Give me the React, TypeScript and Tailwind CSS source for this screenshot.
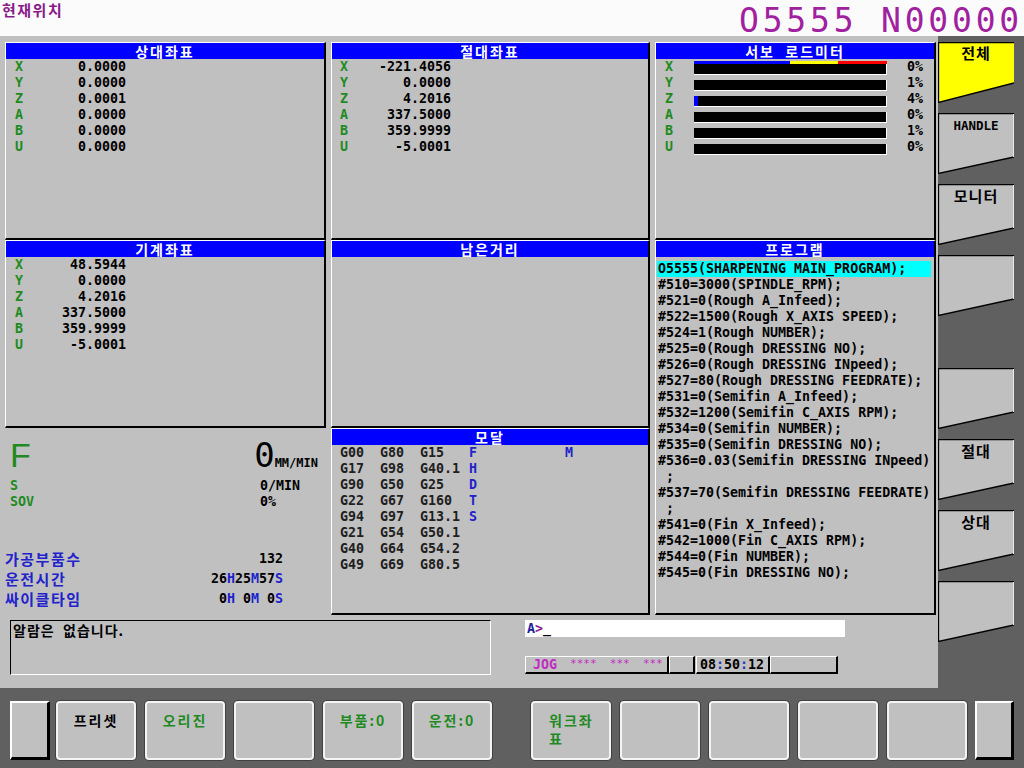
import type { ReactNode } from "react";

const mono = "font-['DejaVu_Sans_Mono','Liberation_Mono',monospace]";
const kr = "font-['Noto_Sans_CJK_KR','Noto_Sans',sans-serif]";

const relative = [
  ["X", "0.0000"],
  ["Y", "0.0000"],
  ["Z", "0.0001"],
  ["A", "0.0000"],
  ["B", "0.0000"],
  ["U", "0.0000"],
];

const absolute = [
  ["X", "-221.4056"],
  ["Y", "0.0000"],
  ["Z", "4.2016"],
  ["A", "337.5000"],
  ["B", "359.9999"],
  ["U", "-5.0001"],
];

const machine = [
  ["X", "48.5944"],
  ["Y", "0.0000"],
  ["Z", "4.2016"],
  ["A", "337.5000"],
  ["B", "359.9999"],
  ["U", "-5.0001"],
];

const servo: [string, number, string][] = [
  ["X", 0, "0%"],
  ["Y", 0, "1%"],
  ["Z", 4, "4%"],
  ["A", 0, "0%"],
  ["B", 0, "1%"],
  ["U", 0, "0%"],
];

const modal = [
  ["G00", "G80", "G15", "F", "M"],
  ["G17", "G98", "G40.1", "H", ""],
  ["G90", "G50", "G25", "D", ""],
  ["G22", "G67", "G160", "T", ""],
  ["G94", "G97", "G13.1", "S", ""],
  ["G21", "G54", "G50.1", "", ""],
  ["G40", "G64", "G54.2", "", ""],
  ["G49", "G69", "G80.5", "", ""],
];

const program = [
  "O5555(SHARPENING MAIN_PROGRAM);",
  "#510=3000(SPINDLE_RPM);",
  "#521=0(Rough A_Infeed);",
  "#522=1500(Rough X_AXIS SPEED);",
  "#524=1(Rough NUMBER);",
  "#525=0(Rough DRESSING NO);",
  "#526=0(Rough DRESSING INpeed);",
  "#527=80(Rough DRESSING FEEDRATE);",
  "#531=0(Semifin A_Infeed);",
  "#532=1200(Semifin C_AXIS RPM);",
  "#534=0(Semifin NUMBER);",
  "#535=0(Semifin DRESSING NO);",
  "#536=0.03(Semifin DRESSING INpeed)",
  " ;",
  "#537=70(Semifin DRESSING FEEDRATE)",
  " ;",
  "#541=0(Fin X_Infeed);",
  "#542=1000(Fin C_AXIS RPM);",
  "#544=0(Fin NUMBER);",
  "#545=0(Fin DRESSING NO);",
];

function Panel({
  title,
  className,
  children,
}: {
  title: string;
  className?: string;
  children?: ReactNode;
}) {
  return (
    <div
      className={`flex flex-col border-t border-l border-t-white border-l-white border-r-2 border-b-2 border-r-black border-b-black ${className ?? ""}`}
    >
      <div
        className={`h-4 whitespace-pre bg-[#0000ff] text-center text-[14px] font-bold leading-4 tracking-[2px] text-white ${kr}`}
      >
        {title}
      </div>
      <div className="flex-1">{children}</div>
    </div>
  );
}

function AxisRows({ rows, pad }: { rows: string[][]; pad: string }) {
  return (
    <div className={`${pad} text-[13.3px] font-bold leading-4 ${mono}`}>
      {rows.map(([axis, value]) => (
        <div className="flex h-4" key={axis}>
          <span className="w-[20px] text-[#1f8a1f]">{axis}</span>
          <span className="w-[91px] text-right text-black">{value}</span>
        </div>
      ))}
    </div>
  );
}

function SideKey({
  label,
  yellow,
  className,
  labelClass,
}: {
  label?: string;
  yellow?: boolean;
  className?: string;
  labelClass?: string;
}) {
  return (
    <div className={`relative h-[61px] w-[76px] ${className ?? ""}`}>
      <svg className="absolute inset-0" width="76" height="61" viewBox="0 0 76 61">
        <polygon
          points={yellow ? "0.5,0.5 76,0.5 76,41 0.5,60.5" : "0.5,0.5 76,0.5 76,44 0.5,60.5"}
          fill={yellow ? "#ffff00" : "#c0c0c0"}
        />
        <polyline
          points={yellow ? "76,41 0.5,60.5 0.5,0.5 76,0.5" : "76,44 0.5,60.5 0.5,0.5 76,0.5"}
          fill="none"
          stroke="#000"
          strokeWidth="1.3"
        />
        {yellow ? null : (
          <line x1="75.5" y1="1" x2="75.5" y2="44" stroke="#e8e8e8" strokeWidth="1" />
        )}
      </svg>
      {label ? (
        <div className={`relative text-center font-bold text-black ${labelClass ?? ""}`}>
          {label}
        </div>
      ) : null}
    </div>
  );
}

function SoftKey({ children, green }: { children?: ReactNode; green?: boolean }) {
  return (
    <div
      className={`h-[59px] w-[80px] rounded-[4px] border-2 border-[#f4f4f4] bg-[#c0c0c0] pt-[9px] text-center text-[14px] font-bold leading-[16px] tracking-[2px] shadow-[0_0_0_1px_#404040] ${kr} ${green ? "text-[#1f8a1f]" : "text-black"}`}
    >
      {children}
    </div>
  );
}

export default function App() {
  return (
    <div className="flex h-[768px] w-[1024px] flex-col overflow-hidden bg-[#606060]">
      <div className="flex h-[36px] items-start justify-between bg-[#fbfbfb]">
        <span
          className={`pt-[1px] pl-[2px] text-[15px] font-bold leading-[18px] tracking-[1.5px] text-[#8a1a8a] ${kr}`}
        >
          현재위치
        </span>
        <span
          className={`pt-[4px] pr-[1px] text-[33px] leading-[33px] tracking-[3.8px] text-[#a0209f] ${mono}`}
        >
          O5555 N00000
        </span>
      </div>

      <div className="flex h-[652px]">
        <div className="flex w-[938px] flex-col bg-[#c0c0c0] px-[5px] pt-[6px]">
          <div className="grid grid-cols-[321px_319px_281px] grid-rows-[198px_188px_187px] gap-x-[5px]">
            <Panel title="상대좌표">
              <AxisRows rows={relative} pad="pl-[9px]" />
            </Panel>
            <Panel title="절대좌표">
              <AxisRows rows={absolute} pad="pl-[8px]" />
            </Panel>
            <Panel title="서보  로드미터">
              <div className={`pl-[9px] text-[13.3px] font-bold leading-4 ${mono}`}>
                {servo.map(([axis, fill, pct]) => (
                  <div className="flex h-4" key={axis}>
                    <span className="w-[29px] text-[#1f8a1f]">{axis}</span>
                    <div className="flex h-4 w-[193px] items-end">
                      <div className="relative h-[11px] w-full border-r border-b border-white bg-black">
                        {fill ? (
                          <div className="h-full bg-[#0000ff]" style={{ width: fill }} />
                        ) : null}
                        {axis === "X" ? (
                          <div className="absolute -top-[3px] left-0 flex h-[3px] w-[193px]">
                            <div className="w-[96px] bg-[#0000ff]" />
                            <div className="w-[48px] bg-[#ffff00]" />
                            <div className="w-[49px] bg-[#ff0000]" />
                          </div>
                        ) : null}
                      </div>
                    </div>
                    <span className="w-[36px] text-right text-black">{pct}</span>
                  </div>
                ))}
              </div>
            </Panel>

            <Panel title="기계좌표">
              <AxisRows rows={machine} pad="pl-[9px]" />
            </Panel>
            <Panel title="남은거리" />
            <Panel title="프로그램" className="row-span-2">
              <div className={`pt-[4px] pr-[3px] pl-[1px] text-[13.3px] font-bold leading-4 text-black ${mono}`}>
                {program.map((line, i) => (
                  <div
                    className={`h-4 whitespace-pre pl-[1px] ${i === 0 ? "bg-[#00ffff]" : ""}`}
                    key={i}
                  >
                    {line}
                  </div>
                ))}
              </div>
            </Panel>

            <div className="flex flex-col">
              <div className="mt-[10px] flex items-baseline justify-between pr-[8px] pl-[5px]">
                <span className="font-['Liberation_Sans',sans-serif] text-[34px] leading-[34px] text-[#1f8a1f]">
                  F
                </span>
                <span className={`flex items-baseline font-bold text-black ${mono}`}>
                  <span className="text-[34px] leading-[34px] font-normal">0</span>
                  <span className="text-[12px] leading-[12px]">MM/MIN</span>
                </span>
              </div>
              <div className={`mt-[6px] pl-[5px] text-[13.3px] font-bold leading-4 ${mono}`}>
                <div className="flex h-4">
                  <span className="w-[250px] text-[#1f8a1f]">S</span>
                  <span className="text-black">0/MIN</span>
                </div>
                <div className="flex h-4">
                  <span className="w-[250px] text-[#1f8a1f]">SOV</span>
                  <span className="text-black">0%</span>
                </div>
              </div>
              <div className="mt-[39px] flex flex-col">
                <div className="flex h-[20px] items-center">
                  <span className={`w-[200px] text-[15px] font-bold tracking-[1.5px] text-[#2222cc] ${kr}`}>
                    가공부품수
                  </span>
                  <span className={`w-[78px] text-right text-[13.3px] font-bold text-black ${mono}`}>
                    132
                  </span>
                </div>
                <div className="flex h-[20px] items-center">
                  <span className={`w-[200px] text-[15px] font-bold tracking-[1.5px] text-[#2222cc] ${kr}`}>
                    운전시간
                  </span>
                  <span className={`w-[78px] text-right text-[13.3px] font-bold text-black ${mono}`}>
                    26<span className="text-[#2222cc]">H</span>25<span className="text-[#2222cc]">M</span>57
                    <span className="text-[#2222cc]">S</span>
                  </span>
                </div>
                <div className="flex h-[20px] items-center">
                  <span className={`w-[200px] text-[15px] font-bold tracking-[1.5px] text-[#2222cc] ${kr}`}>
                    싸이클타임
                  </span>
                  <span className={`w-[78px] whitespace-pre text-right text-[13.3px] font-bold text-black ${mono}`}>
                    0<span className="text-[#2222cc]">H</span> 0<span className="text-[#2222cc]">M</span> 0
                    <span className="text-[#2222cc]">S</span>
                  </span>
                </div>
              </div>
            </div>
            <Panel title="모달">
              <div className={`pl-[8px] text-[13.3px] font-bold leading-4 ${mono}`}>
                {modal.map(([a, b, c, d, m]) => (
                  <div className="flex h-4" key={a}>
                    <span className="w-[40px] text-[#202020]">{a}</span>
                    <span className="w-[40px] text-[#202020]">{b}</span>
                    <span className="w-[49px] text-[#202020]">{c}</span>
                    <span className="w-[96px] text-[#2222cc]">{d}</span>
                    <span className="text-[#2222cc]">{m}</span>
                  </div>
                ))}
              </div>
            </Panel>
          </div>

          <div className="mt-[5px] flex">
            <div
              className={`ml-[5px] h-[55px] w-[481px] whitespace-pre border-t border-l border-t-black border-l-black border-r border-b border-r-white border-b-white pl-[2px] text-[14px] font-bold leading-[18px] tracking-[1px] text-black ${kr}`}
            >
              알람은  없습니다.
            </div>
            <div className="ml-[34px] flex flex-col">
              <div className={`h-[17px] w-[320px] bg-white pl-[2px] text-[13.3px] font-bold leading-[17px] ${mono}`}>
                <span className="text-[#2020a0]">A</span>
                <span className="text-[#8a1a8a]">&gt;</span>
                <span className="text-black">_</span>
              </div>
              <div className={`mt-[19px] flex h-[18px] font-bold ${mono}`}>
                <div className="flex w-[144px] items-center border-t border-l border-t-white border-l-white border-r-2 border-b-2 border-r-black border-b-black pl-[7px]">
                  <span className="text-[13.3px] text-[#c02cc0]">JOG</span>
                  <span className="ml-[13px] whitespace-pre text-[11px] font-normal text-[#c02cc0]">
                    ****  ***  ***
                  </span>
                </div>
                <div className="w-[26px] border-t border-l border-t-white border-l-white border-r-2 border-b-2 border-r-black border-b-black" />
                <div className="ml-[1px] flex w-[74px] items-center border-t border-l border-t-white border-l-white border-r-2 border-b-2 border-r-black border-b-black pl-[3px] text-[13.3px] text-black">
                  08<span className="text-[#3030c0]">:</span>50<span className="text-[#3030c0]">:</span>12
                </div>
                <div className="w-[68px] border-t border-l border-t-white border-l-white border-r-2 border-b-2 border-r-black border-b-black" />
              </div>
            </div>
          </div>
        </div>

        <div className="flex flex-1 flex-col gap-[10px] pt-[6px]">
          <SideKey label="전체" yellow labelClass={`pt-[2px] text-[15px] leading-[18px] tracking-[1px] ${kr}`} />
          <SideKey label="HANDLE" labelClass={`pt-[5px] text-[12.5px] leading-4 ${mono}`} />
          <SideKey label="모니터" labelClass={`pt-[3px] text-[15px] leading-[18px] tracking-[1px] ${kr}`} />
          <SideKey />
          <SideKey className="mt-[42px]" />
          <SideKey label="절대" labelClass={`pt-[3px] text-[15px] leading-[18px] tracking-[1px] ${kr}`} />
          <SideKey label="상대" labelClass={`pt-[3px] text-[15px] leading-[18px] tracking-[1px] ${kr}`} />
          <SideKey />
        </div>
      </div>

      <div className="flex pt-[13px] pl-[10px]">
        <div className="h-[59px] w-[40px] border-t-2 border-l-2 border-t-white border-l-white border-r-[3px] border-b-[3px] border-r-black border-b-black bg-[#c0c0c0]" />
        <div className="ml-[6px] flex gap-[9px]">
          <SoftKey>프리셋</SoftKey>
          <SoftKey green>오리진</SoftKey>
          <SoftKey />
          <SoftKey green>부품:0</SoftKey>
          <SoftKey green>운전:0</SoftKey>
        </div>
        <div className="ml-[39px] flex gap-[9px]">
          <SoftKey green>
            <div className="-mt-[1px] flex flex-col pl-[16px] text-left leading-[18px]">
              <span>워크좌</span>
              <span>표</span>
            </div>
          </SoftKey>
          <SoftKey />
          <SoftKey />
          <SoftKey />
          <SoftKey />
        </div>
        <div className="ml-[8px] h-[59px] w-[39px] border-t-2 border-l-2 border-t-white border-l-white border-r-[3px] border-b-[3px] border-r-black border-b-black bg-[#c0c0c0]" />
      </div>
    </div>
  );
}
